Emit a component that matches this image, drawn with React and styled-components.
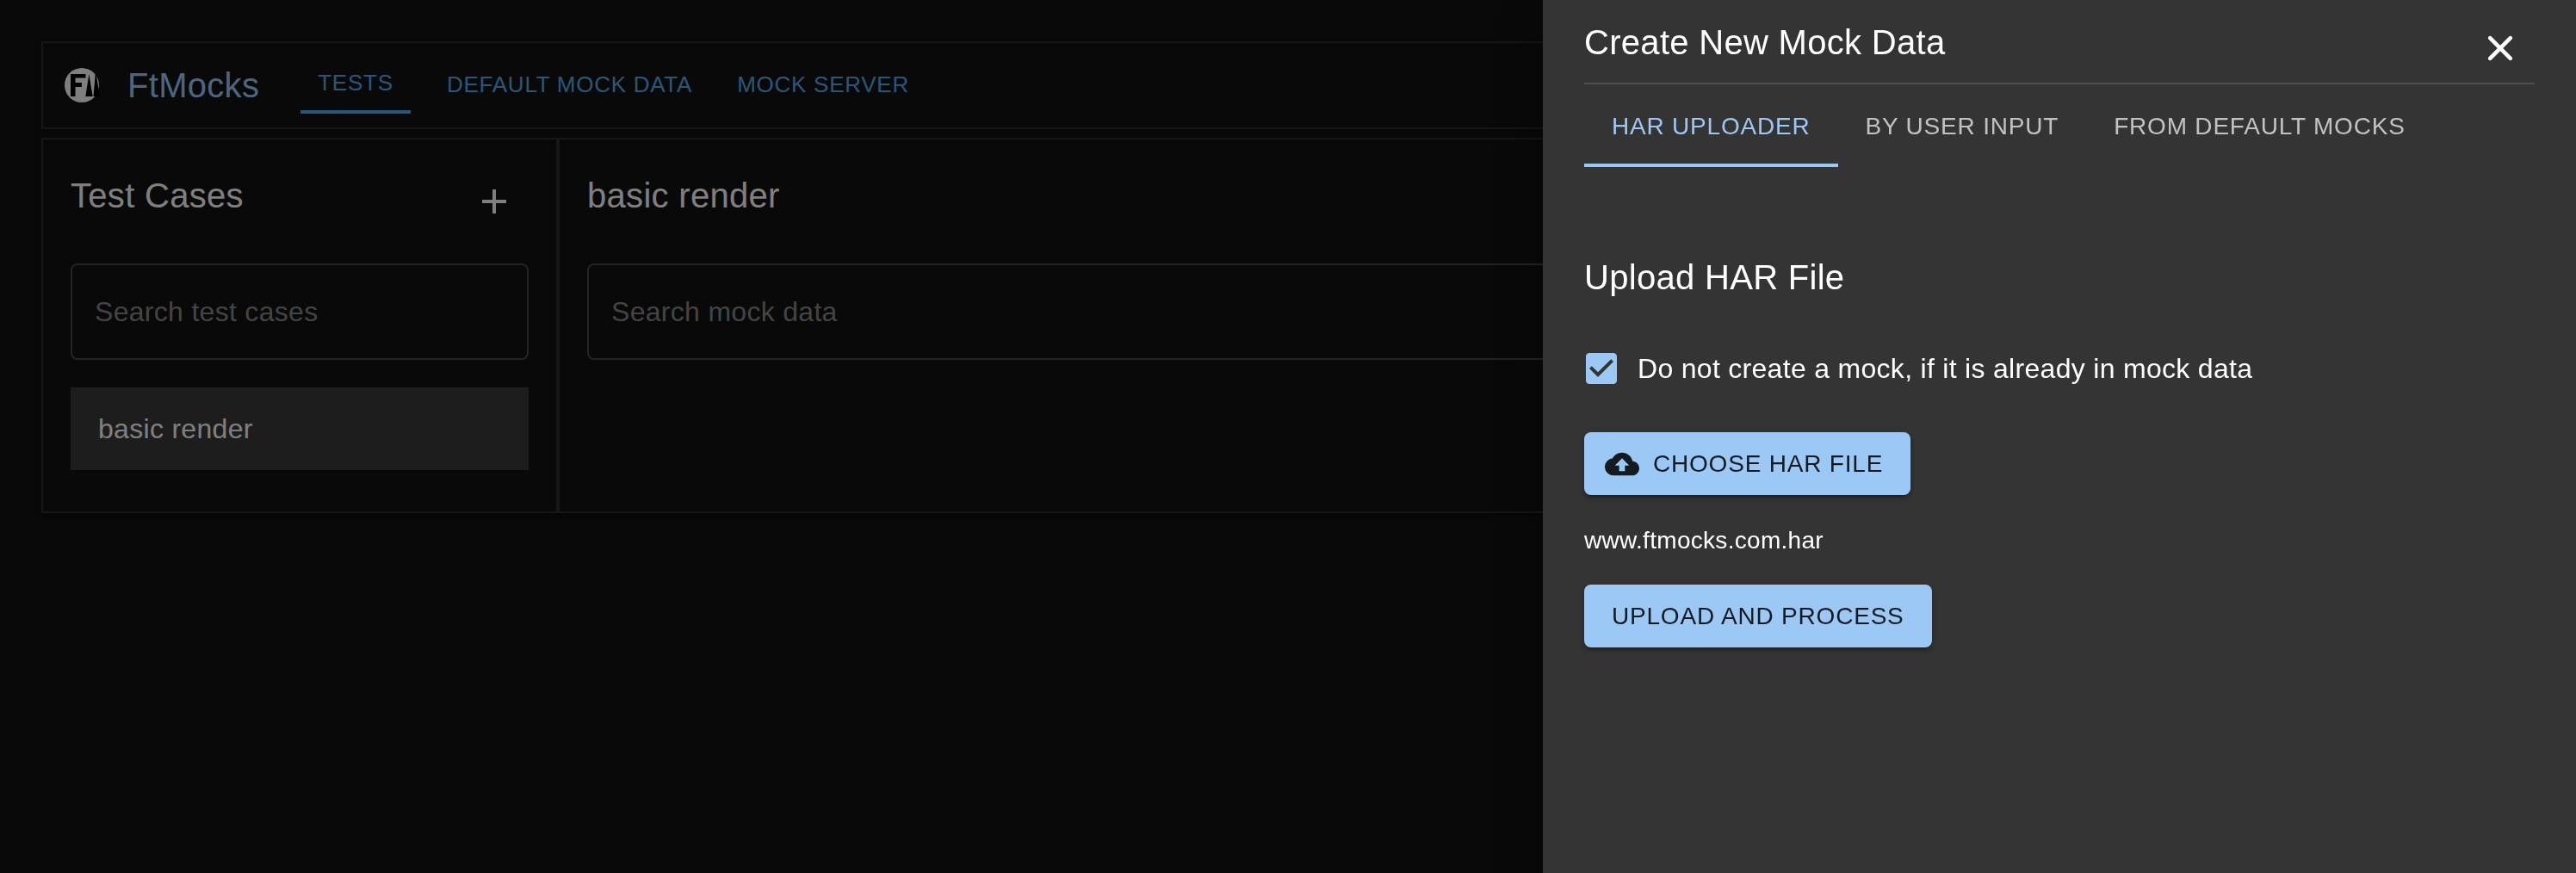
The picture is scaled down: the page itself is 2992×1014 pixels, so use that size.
import React from "react";
import styled, { createGlobalStyle } from "styled-components";

const GlobalStyle = createGlobalStyle`
  *, *::before, *::after { box-sizing: border-box; }
  body {
    margin: 0;
    overflow: hidden;
    background: #121212;
    color: #fff;
    font-family: "Liberation Sans", Helvetica, Arial, sans-serif;
    font-size: 32px;
  }
`;

const Page = styled.div`
  display: flex;
  flex-direction: column;
  gap: 10px;
  height: 1014px;
  padding: 48px;
`;

const AppBar = styled.header`
  display: flex;
  align-items: center;
  height: 102px;
  padding: 0 25px;
  border: 2px solid #2c2c2c;
  box-shadow: 0 4px 2px -2px rgba(0, 0, 0, 0.2), 0 2px 2px rgba(0, 0, 0, 0.14),
    0 2px 6px rgba(0, 0, 0, 0.12);
`;

const Brand = styled.div`
  display: flex;
  align-items: center;
  gap: 31px;
  width: 274px;
  color: #9ccaff;
`;

const Logo = styled.svg`
  width: 42px;
  height: 42px;
  flex: none;
`;

const Title = styled.h2`
  margin: 0;
  padding-top: ${(p) => p.$drop || 0}px;
  font-size: 40px;
  font-weight: 400;
  line-height: 64px;
  letter-spacing: 0.3px;
`;

const Nav = styled.nav`
  display: flex;
  align-items: center;
  gap: 32px;
`;

const NavButton = styled.button`
  min-width: 128px;
  height: ${(p) => (p.$active ? 66 : 62)}px;
  padding: 0 10px 2px;
  border: 0;
  border-bottom: ${(p) => (p.$active ? "4px solid #55aeee" : "0")};
  background: none;
  color: #55aeee;
  font: inherit;
  font-size: 26px;
  letter-spacing: 0.74px;
  text-transform: uppercase;
  white-space: nowrap;
`;

const Panels = styled.main`
  display: flex;
  height: 436px;
  border: 2px solid #2c2c2c;
  box-shadow: 0 4px 2px -2px rgba(0, 0, 0, 0.2), 0 2px 2px rgba(0, 0, 0, 0.14),
    0 2px 6px rgba(0, 0, 0, 0.12);
`;

const Panel = styled.section`
  display: flex;
  flex-direction: column;
  gap: 32px;
  flex: ${(p) => (p.$width ? "none" : "1")};
  width: ${(p) => (p.$width ? p.$width + "px" : "auto")};
  padding: 32px;
  border-right: ${(p) => (p.$divider ? "4px solid #2c2c2c" : "0")};
`;

const PanelHeader = styled.div`
  display: flex;
  justify-content: space-between;
  align-items: flex-start;
  height: 80px;
`;

const IconButton = styled.button`
  display: flex;
  padding: 16px;
  border: 0;
  background: none;
  color: #fff;
`;

const Icon = styled.svg`
  width: ${(p) => p.$size || 48}px;
  height: ${(p) => p.$size || 48}px;
  fill: currentColor;
  flex: none;
`;

const SearchField = styled.input`
  width: 100%;
  height: 112px;
  padding: 0 26px;
  border: 2px solid #484848;
  border-radius: 8px;
  background: none;
  color: #fff;
  font: inherit;
  letter-spacing: 0.3px;
  &::placeholder {
    color: #888;
    opacity: 1;
  }
`;

const ListItem = styled.div`
  height: 96px;
  padding: 24px 32px;
  background: #3b3b3b;
  line-height: 48px;
  letter-spacing: 0.3px;
`;

const Backdrop = styled.div`
  position: fixed;
  inset: 0;
  display: flex;
  justify-content: flex-end;
  background: rgba(0, 0, 0, 0.5);
`;

const Drawer = styled.aside`
  display: flex;
  flex-direction: column;
  width: 1200px;
  padding: 16px 48px;
  background: #343434;
  box-shadow: 0 16px 20px -10px rgba(0, 0, 0, 0.2),
    0 32px 48px 4px rgba(0, 0, 0, 0.14), 0 12px 60px 10px rgba(0, 0, 0, 0.12);
`;

const DrawerHeader = styled.div`
  display: flex;
  justify-content: space-between;
  align-items: flex-start;
  height: 82px;
  border-bottom: 2px solid #505050;
`;

const Tabs = styled.div`
  display: flex;
  height: 96px;
`;

const Tab = styled.button`
  padding: 4px 32px ${(p) => (p.$active ? 0 : 4)}px;
  border: 0;
  border-bottom: ${(p) => (p.$active ? "4px solid #9cc8f5" : "0")};
  background: none;
  color: ${(p) => (p.$active ? "#9cc8f5" : "#c2c2c2")};
  font: inherit;
  font-size: 28px;
  line-height: 35px;
  letter-spacing: 0.8px;
  text-transform: uppercase;
  white-space: nowrap;
`;

const Uploader = styled.div`
  display: flex;
  flex-direction: column;
  align-items: flex-start;
  padding-top: 96px;
`;

const CheckLabel = styled.label`
  display: flex;
  align-items: center;
  gap: 18px;
  height: 48px;
  margin: 50px 0 50px -4px;
  line-height: 48px;
  letter-spacing: 0.3px;
  svg {
    color: #9cc8f5;
  }
`;

const Button = styled.button`
  display: flex;
  align-items: center;
  gap: 16px;
  height: 73px;
  padding: 0 32px 0 ${(p) => (p.$icon ? 24 : 32)}px;
  border: 0;
  border-radius: 8px;
  background: #9cc8f5;
  color: #141a20;
  font: inherit;
  font-size: 28px;
  letter-spacing: 0.8px;
  text-transform: uppercase;
  white-space: nowrap;
  box-shadow: 0 6px 2px -4px rgba(0, 0, 0, 0.2), 0 4px 4px rgba(0, 0, 0, 0.14),
    0 2px 10px rgba(0, 0, 0, 0.12);
`;

const FileName = styled.p`
  margin: 33px 0 31px;
  font-size: 28px;
  line-height: 40px;
  letter-spacing: 0.3px;
`;

export default function App() {
  return (
    <>
      <GlobalStyle />
      <Page>
        <AppBar>
          <Brand>
            <Logo viewBox="0 0 42 42">
              <circle cx="20" cy="21" r="20" fill="#fff" />
              <path d="M7 8h17.5v4.5h-12V18H20v5h-7.5v11H7z" />
              <path d="M24.3 34 28.4 8l4.3 26zM33.5 34l2.2-26h1L41 34z" />
            </Logo>
            <Title>FtMocks</Title>
          </Brand>
          <Nav>
            <NavButton $active>Tests</NavButton>
            <NavButton>Default Mock Data</NavButton>
            <NavButton>Mock Server</NavButton>
          </Nav>
        </AppBar>
        <Panels>
          <Panel $width={600} $divider>
            <PanelHeader>
              <Title $drop={1}>Test Cases</Title>
              <IconButton aria-label="Add test case">
                <Icon viewBox="0 0 24 24">
                  <path d="M19 13h-6v6h-2v-6H5v-2h6V5h2v6h6v2z" />
                </Icon>
              </IconButton>
            </PanelHeader>
            <SearchField placeholder="Search test cases" />
            <ListItem>basic render</ListItem>
          </Panel>
          <Panel>
            <PanelHeader>
              <Title $drop={1}>basic render</Title>
            </PanelHeader>
            <SearchField placeholder="Search mock data" />
          </Panel>
        </Panels>
      </Page>
      <Backdrop>
        <Drawer>
          <DrawerHeader>
            <Title $drop={1}>Create New Mock Data</Title>
            <IconButton aria-label="Close">
              <Icon viewBox="0 0 24 24">
                <path
                  d="M6.1 6.1 17.9 17.9M17.9 6.1 6.1 17.9"
                  stroke="currentColor"
                  strokeWidth="2.3"
                  strokeLinecap="round"
                />
              </Icon>
            </IconButton>
          </DrawerHeader>
          <Tabs>
            <Tab $active>HAR Uploader</Tab>
            <Tab>By User Input</Tab>
            <Tab>From Default Mocks</Tab>
          </Tabs>
          <Uploader>
            <Title>Upload HAR File</Title>
            <CheckLabel>
              <Icon viewBox="0 0 24 24">
                <path d="M19 3H5c-1.11 0-2 .9-2 2v14c0 1.1.89 2 2 2h14c1.11 0 2-.9 2-2V5c0-1.1-.89-2-2-2zm-9 14l-5-5 1.41-1.41L10 14.17l7.59-7.59L19 8l-9 9z" />
              </Icon>
              Do not create a mock, if it is already in mock data
            </CheckLabel>
            <Button $icon>
              <Icon $size={40} viewBox="0 0 24 24">
                <path d="M19.35 10.04C18.67 6.59 15.64 4 12 4 9.11 4 6.6 5.64 5.35 8.04 2.34 8.36 0 10.91 0 14c0 3.31 2.69 6 6 6h13c2.76 0 5-2.24 5-5 0-2.64-2.05-4.78-4.65-4.96zM14 13v4h-4v-4H7l5-5 5 5h-3z" />
              </Icon>
              Choose HAR File
            </Button>
            <FileName>www.ftmocks.com.har</FileName>
            <Button>Upload and Process</Button>
          </Uploader>
        </Drawer>
      </Backdrop>
    </>
  );
}
